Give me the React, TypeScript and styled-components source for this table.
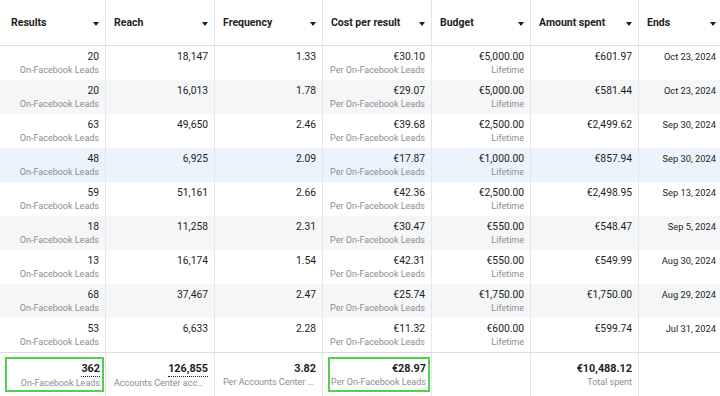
import styled, { createGlobalStyle } from 'styled-components'

const GlobalStyle = createGlobalStyle`
  html, body {
    margin: 0;
    padding: 0;
    background: #ffffff;
  }
  body {
    font-family: Roboto, 'Liberation Sans', Arial, sans-serif;
    color: #1c1e21;
  }
`

const COLS = '106px 109px 108px 109px 99px 108px 84px'

interface Row {
  results: string
  reach: string
  frequency: string
  cost: string
  budget: string
  spent: string
  ends: string
  tone?: 'gray' | 'blue'
}

const rows: Row[] = [
  { results: '20', reach: '18,147', frequency: '1.33', cost: '€30.10', budget: '€5,000.00', spent: '€601.97', ends: 'Oct 23, 2024' },
  { results: '20', reach: '16,013', frequency: '1.78', cost: '€29.07', budget: '€5,000.00', spent: '€581.44', ends: 'Oct 23, 2024', tone: 'gray' },
  { results: '63', reach: '49,650', frequency: '2.46', cost: '€39.68', budget: '€2,500.00', spent: '€2,499.62', ends: 'Sep 30, 2024' },
  { results: '48', reach: '6,925', frequency: '2.09', cost: '€17.87', budget: '€1,000.00', spent: '€857.94', ends: 'Sep 30, 2024', tone: 'blue' },
  { results: '59', reach: '51,161', frequency: '2.66', cost: '€42.36', budget: '€2,500.00', spent: '€2,498.95', ends: 'Sep 13, 2024' },
  { results: '18', reach: '11,258', frequency: '2.31', cost: '€30.47', budget: '€550.00', spent: '€548.47', ends: 'Sep 5, 2024', tone: 'gray' },
  { results: '13', reach: '16,174', frequency: '1.54', cost: '€42.31', budget: '€550.00', spent: '€549.99', ends: 'Aug 30, 2024' },
  { results: '68', reach: '37,467', frequency: '2.47', cost: '€25.74', budget: '€1,750.00', spent: '€1,750.00', ends: 'Aug 29, 2024', tone: 'gray' },
  { results: '53', reach: '6,633', frequency: '2.28', cost: '€11.32', budget: '€600.00', spent: '€599.74', ends: 'Jul 31, 2024' },
]

const headers = ['Results', 'Reach', 'Frequency', 'Cost per result', 'Budget', 'Amount spent', 'Ends']

const Table = styled.div`
  width: 720px;
  height: 396px;
  overflow: hidden;
`

const Grid = styled.div`
  display: grid;
  grid-template-columns: ${COLS};
  width: 723px;
`

const HeaderRow = styled(Grid)`
  height: 46px;
  border-bottom: 1px solid #dadde1;
  box-sizing: border-box;
`

const HeaderCell = styled.div<{ $first?: boolean }>`
  display: flex;
  align-items: center;
  justify-content: space-between;
  padding: 0 6px 0 ${(p) => (p.$first ? '11px' : '8px')};
  border-right: 1px solid #e4e6eb;
  font-weight: 700;
  font-size: 10.5px;
  color: #1c1e21;
  white-space: nowrap;
`

const Caret = styled.span`
  width: 0;
  height: 0;
  border-left: 3.5px solid transparent;
  border-right: 3.5px solid transparent;
  border-top: 4px solid #1c1e21;
  margin-top: 2px;
`

const BodyRow = styled(Grid)<{ $tone?: 'gray' | 'blue' }>`
  height: 34px;
  background: ${(p) => (p.$tone === 'gray' ? '#f5f6f7' : p.$tone === 'blue' ? '#ebf3fd' : '#ffffff')};
`

const Cell = styled.div`
  display: flex;
  flex-direction: column;
  align-items: flex-end;
  padding: 4px 6px 0 2px;
  border-right: 1px solid #e4e6eb;
  min-width: 0;
`

const Value = styled.span<{ $small?: boolean }>`
  font-size: ${(p) => (p.$small ? '9.3px' : '10.3px')};
  line-height: 14px;
  color: #1c1e21;
  white-space: nowrap;
`

const Sub = styled.span`
  font-size: 9px;
  line-height: 13px;
  color: #8a8d91;
  white-space: nowrap;
  max-width: 100%;
  overflow: hidden;
  text-overflow: ellipsis;
`

const FooterRow = styled(Grid)`
  height: 44px;
  border-top: 1px solid #dadde1;
  box-sizing: border-box;
`

const FooterCell = styled.div`
  display: flex;
  flex-direction: column;
  align-items: flex-end;
  padding: 4px 1px 0 5px;
  border-right: 1px solid #e4e6eb;
  min-width: 0;
`

const Total = styled.span<{ $dotted?: boolean }>`
  font-weight: 700;
  font-size: 10.8px;
  line-height: 14px;
  margin-top: 3px;
  color: #1c1e21;
  white-space: nowrap;
  border-bottom: ${(p) => (p.$dotted ? '1px dotted #1c1e21' : 'none')};
`

const Highlight = styled.div`
  align-self: stretch;
  display: flex;
  flex-direction: column;
  align-items: flex-end;
  border: 2px solid #52d14a;
  padding: 0 2px 2px 0;
  height: 35px;
  box-sizing: border-box;
`

const Plain = styled.div`
  align-self: stretch;
  display: flex;
  flex-direction: column;
  align-items: flex-end;
  padding: 2px 5px 0 3px;
  min-width: 0;
`

export default function App() {
  return (
    <>
      <GlobalStyle />
      <Table>
        <HeaderRow>
          {headers.map((h, i) => (
            <HeaderCell key={h} $first={i === 0}>
              {h}
              <Caret />
            </HeaderCell>
          ))}
        </HeaderRow>
        {rows.map((r, i) => (
          <BodyRow key={i} $tone={r.tone}>
            <Cell>
              <Value>{r.results}</Value>
              <Sub>On-Facebook Leads</Sub>
            </Cell>
            <Cell>
              <Value>{r.reach}</Value>
            </Cell>
            <Cell>
              <Value>{r.frequency}</Value>
            </Cell>
            <Cell>
              <Value>{r.cost}</Value>
              <Sub>Per On-Facebook Leads</Sub>
            </Cell>
            <Cell>
              <Value>{r.budget}</Value>
              <Sub>Lifetime</Sub>
            </Cell>
            <Cell>
              <Value>{r.spent}</Value>
            </Cell>
            <Cell>
              <Value $small>{r.ends}</Value>
            </Cell>
          </BodyRow>
        ))}
        <FooterRow>
          <FooterCell>
            <Highlight>
              <Total $dotted>362</Total>
              <Sub>On-Facebook Leads</Sub>
            </Highlight>
          </FooterCell>
          <FooterCell>
            <Plain>
              <Total $dotted>126,855</Total>
              <Sub>Accounts Center accounts</Sub>
            </Plain>
          </FooterCell>
          <FooterCell>
            <Plain>
              <Total>3.82</Total>
              <Sub>Per Accounts Center account</Sub>
            </Plain>
          </FooterCell>
          <FooterCell>
            <Highlight>
              <Total>€28.97</Total>
              <Sub>Per On-Facebook Leads</Sub>
            </Highlight>
          </FooterCell>
          <FooterCell />
          <FooterCell>
            <Plain>
              <Total>€10,488.12</Total>
              <Sub>Total spent</Sub>
            </Plain>
          </FooterCell>
          <FooterCell />
        </FooterRow>
      </Table>
    </>
  )
}
